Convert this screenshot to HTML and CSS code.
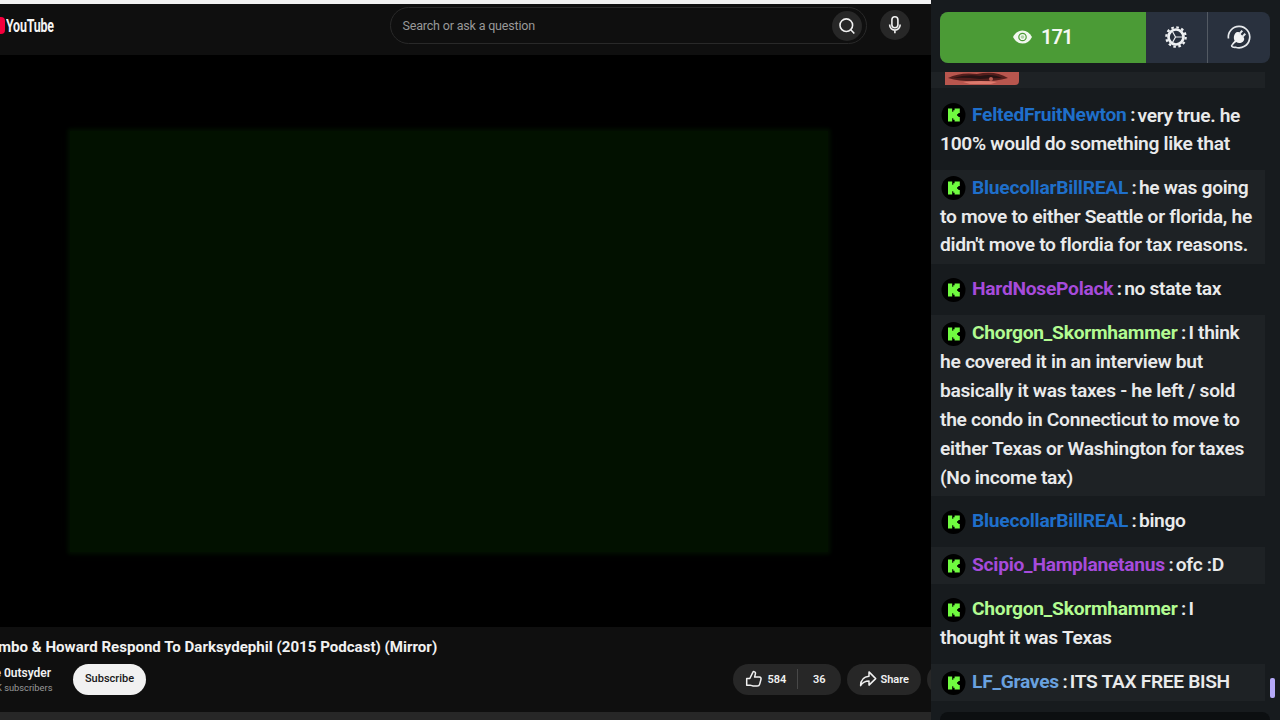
FILE: index.html
```html
<!DOCTYPE html>
<html lang="en">
<head>
<meta charset="utf-8">
<title>YouTube</title>
<link rel="stylesheet" href="styles.css">
</head>
<body>
<svg class="defs" width="0" height="0">
  <symbol id="kick" viewBox="0 0 24 24"><circle cx="12" cy="12" r="12" fill="#000"/><path d="M6.500 5.500h4.200v3.300h1.100V7.200h1.300V5.500h5.200v4.400h-1.500v1.200h-1.100v1.800h1.100v1.200h1.500v4.400h-5.200v-1.700h-1.300v-1.600h-1.100v3.300H6.500z" fill="#70fb40"/></symbol>
</svg>
<div class="app">
  <main class="watch">
    <div class="browser-edge"></div>
    <header class="masthead">
      <div class="logo"><span class="logo-mark"></span><span class="logo-word">YouTube</span></div>
      <div class="search">
        <span class="search-text">Search or ask a question</span>
        <span class="round search-btn"><svg width="30" height="30" viewBox="0 0 30 30"><circle cx="14.3" cy="14.2" r="6.3"/><path d="M18.8 18.8l3.5 3.7"/></svg></span>
      </div>
      <span class="round mic"><svg width="30" height="30" viewBox="0 0 30 30"><rect x="11.9" y="6.7" width="6" height="11" rx="3"/><path d="M9.7 14.4v.8a5.2 4.9 0 0 0 10.4 0v-.8M14.9 20v3.3"/></svg></span>
    </header>
    <div class="player"><div class="glow"></div></div>
    <section class="info">
      <h1 class="title"><span>mbo &amp; Howard Respond To Darksydephil (2015 Podcast) (Mirror)</span></h1>
      <div class="owner-row">
        <div class="owner"><span class="channel">e 0utsyder</span><span class="subs">K subscribers</span></div>
        <span class="subscribe">Subscribe</span>
        <div class="actions">
          <div class="pill votes">
            <svg width="18" height="18" viewBox="0 0 18 18"><path d="M1.700 8.500h3.100l3-6.100c.3-.7.8-1 1.400-.8 1 .3 1.500 1.100 1.200 2.300l-.8 3.200h4.800c1.300 0 1.900 1 1.600 2.200l-1.300 4.800c-.3 1.200-1.200 2-2.500 2H9c-1.500 0-2.600-.9-3.800-.9H1.700z"/></svg>
            <span class="likes">584</span><span class="sep"></span><span class="dislikes">36</span>
          </div>
          <div class="pill share">
            <svg width="18" height="18" viewBox="0 0 18 18"><path d="M10 1.900l6.700 6.700-6.700 6.500v-4c-3.500 0-6.300 1.400-8.400 4.500.1-5.100 2.500-8.800 8.400-9.400z"/></svg>
            <span>Share</span>
          </div>
          <div class="pill more"></div>
        </div>
      </div>
    </section>
    <div class="description"></div>
  </main>
  <aside class="chat">
    <div class="toolbar">
      <div class="viewers"><svg width="19" height="14" viewBox="0 0 19 14"><path d="M0 7C2.300 2.600 5.400.4 9.500.4S16.700 2.600 19 7c-2.300 4.400-5.400 6.600-9.500 6.600S2.300 11.400 0 7z" fill="#f2f7ef"/><circle cx="9.500" cy="7" r="3.700" fill="none" stroke="#4b9b36" stroke-width="1.200"/><circle cx="9.500" cy="7" r="1.800" fill="#4b9b36" opacity=".4"/></svg><span>171</span></div>
      <div class="tool"><svg width="24" height="24" viewBox="0 0 24 24" fill="none" stroke="#eef0f2"><circle cx="12" cy="12" r="9.700" stroke-width="2.200" stroke-dasharray="2.600 2.479"/><circle cx="12" cy="12" r="7.500" stroke-width="2.700"/><path d="M11.500 12H18.500M11.500 12L8.500 6.500M11.500 12L8.500 17.500" stroke-width="1.200"/></svg></div>
      <div class="tool last"><svg width="26" height="26" viewBox="0 0 26 26" fill="none" stroke="#e6e9ec"><path d="M2.400 14.500A10.700 10.700 0 1 1 9.500 23.200" stroke-width="1.700"/><path d="M7.200 20.200c-1.800.8-2.300 2.200-.5 2.800 1 .4 2.200.5 3.300.3" stroke-width="1.600"/><path d="M9.300 9.200c1-1.300 2.700-1.500 4-.7l4.500 5c.9 1.600.3 3.200-.9 4.200-2 1.700-4.900 1.700-6.700.2l-3 2.700-1.100-1.200 2.500-2.700c-1.200-2.300-1-5.300.7-7.500z" fill="#f2f3f4" stroke="none"/><path d="M13.300 10l3-3.400M16.300 12.900l3-3.200" stroke-width="2"/></svg></div>
    </div>
    <div class="feed">
      <div class="msg cut striped"><svg class="emote" width="74" height="13" viewBox="0 0 74 13"><path d="M0 0h74v9q0 4-4 4H0z" fill="#b8564e"/><path d="M3 6Q15 0 32 2q18-4 31 4-16 4-28 3Q17 10 3 6z" fill="#531e1c"/><path d="M8 6q14-4 27-2 13-3 22 2-12 0-22 1Q20 5 8 6z" fill="#251313"/><path d="M18 10q18-2 34 0l-6 2H25z" fill="#dc7a6d"/><circle cx="46" cy="7" r="2" fill="#b95b50"/></svg></div>
      <div class="msg"><p class="line first tall"><svg class="badge"><use href="#kick"/></svg><b class="blue">FeltedFruitNewton</b><i>:</i><span class="low">very true. he</span></p><p class="line">100% would do something like that</p></div>
      <div class="msg striped"><p class="line first"><svg class="badge"><use href="#kick"/></svg><b class="blue">BluecollarBillREAL</b><i>:</i><span>he was going</span></p><p class="line">to move to either Seattle or florida, he</p><p class="line">didn't move to flordia for tax reasons.</p></div>
      <div class="msg"><p class="line first"><svg class="badge"><use href="#kick"/></svg><b class="purple">HardNosePolack</b><i>:</i><span>no state tax</span></p></div>
      <div class="msg striped"><p class="line first tall"><svg class="badge"><use href="#kick"/></svg><b class="lime">Chorgon_Skormhammer</b><i>:</i><span>I think</span></p><p class="line">he covered it in an interview but</p><p class="line">basically it was taxes - he left / sold</p><p class="line">the condo in Connecticut to move to</p><p class="line">either Texas or Washington for taxes</p><p class="line">(No income tax)</p></div>
      <div class="msg"><p class="line first"><svg class="badge"><use href="#kick"/></svg><b class="blue">BluecollarBillREAL</b><i>:</i><span>bingo</span></p></div>
      <div class="msg striped"><p class="line first"><svg class="badge"><use href="#kick"/></svg><b class="purple">Scipio_Hamplanetanus</b><i>:</i><span>ofc :D</span></p></div>
      <div class="msg"><p class="line first tall"><svg class="badge"><use href="#kick"/></svg><b class="lime">Chorgon_Skormhammer</b><i>:</i><span>I</span></p><p class="line">thought it was Texas</p></div>
      <div class="msg striped"><p class="line first"><svg class="badge"><use href="#kick"/></svg><b class="sky">LF_Graves</b><i>:</i><span>ITS TAX FREE BISH</span></p></div>
    </div>
    <div class="composer"></div>
    <div class="scroll-thumb"></div>
  </aside>
</div>
</body>
</html>
```
FILE: styles.css
```css
* { box-sizing: border-box; }
body { margin: 0; background: #0f0f0f; font-family: Roboto, "Liberation Sans", sans-serif; overflow: hidden; }
.defs { display: block; position: absolute; }
.app { display: flex; width: 1280px; height: 720px; overflow: hidden; }
.watch { width: 931px; display: flex; flex-direction: column; overflow: hidden; background: #0f0f0f; }
.browser-edge { height: 4px; flex: none; background: #f1f1f1; }
.masthead { height: 51px; flex: none; display: flex; align-items: flex-start; padding-top: 3px; }
.logo { width: 390px; flex: none; display: flex; align-items: center; padding-top: 10px; }
.logo-mark { width: 5px; height: 17px; background: #f5003d; border-radius: 0 4px 4px 0; }
.logo-word { margin-left: 1px; font-size: 18px; line-height: 17px; font-weight: 700; color: #f4f4f4; letter-spacing: -.3px; transform: scaleX(.69); transform-origin: left center; }
.search { width: 477px; height: 37px; flex: none; border: 1px solid #292929; border-radius: 19px; display: flex; align-items: center; justify-content: space-between; padding: 0 4px 0 11.500px; }
.search-text { color: #999; font-size: 12.500px; letter-spacing: -.18px; white-space: nowrap; }
.round { width: 30px; height: 30px; flex: none; border-radius: 50%; background: #272727; }
.round svg { display: block; fill: none; stroke: #f1f1f1; stroke-width: 1.600; }
.mic { margin: 3px 0 0 13px; }
.player { height: 572px; flex: none; background: #000; padding: 76px 103px 75px 70px; }
.glow { height: 100%; background: #021100; box-shadow: 0 0 4px 2px #031002, 0 0 10px 3px #020702; }
.info { height: 85px; flex: none; padding-top: 9px; }
.title { margin: 0 0 0 -2px; font-size: 15.080px; line-height: 22px; font-weight: 700; color: #f1f1f1; white-space: nowrap; }
.owner-row { display: flex; align-items: center; height: 31px; margin-top: 6px; }
.owner { width: 73px; flex: none; display: flex; flex-direction: column; padding-top: 1px; white-space: nowrap; }
.channel { margin-left: -5.500px; font-size: 12px; line-height: 15px; font-weight: 600; color: #f1f1f1; }
.subs { margin-left: -4px; font-size: 9.300px; line-height: 14px; color: #999; }
.subscribe { flex: none; width: 73px; height: 31px; border-radius: 16px; background: #f1f1f1; color: #181818; font-size: 11px; font-weight: 500; line-height: 30px; text-align: center; }
.actions { display: flex; gap: 6px; margin-left: 587px; flex: none; }
.pill { height: 31px; flex: none; border-radius: 16px; background: #272727; display: flex; align-items: center; color: #f1f1f1; font-size: 11px; font-weight: 600; padding-bottom: 1px; }
.pill svg { fill: none; stroke: #f1f1f1; stroke-width: 1.500; stroke-linejoin: round; flex: none; }
.votes { width: 107.500px; padding-left: 12px; }
.likes { margin-left: 4.500px; width: 29.500px; }
.sep { width: 1px; height: 20px; background: #484848; }
.dislikes { margin-left: 15px; }
.share { width: 74px; padding-left: 12px; gap: 4px; }
.more { width: 31px; }
.description { flex: 1; background: #272727; }

.chat { width: 349px; flex: none; background: #171b1e; position: relative; display: flex; flex-direction: column; overflow: hidden; }
.toolbar { margin: 12px 0 0 9px; width: 330px; height: 50.500px; border-radius: 8px; overflow: hidden; display: flex; background: #29313e; flex: none; }
.viewers { width: 205.500px; flex: none; background: #4b9b36; display: flex; align-items: center; justify-content: center; gap: 9px; color: #f5f8f3; font-size: 20px; font-weight: 600; letter-spacing: -.9px; }
.viewers svg { flex: none; }
.tool { width: 61px; flex: none; display: flex; align-items: center; justify-content: center; }
.last { width: 63.500px; border-left: 1.500px solid #535a63; }
.feed { margin-top: 9.500px; width: 334px; display: flex; flex-direction: column; gap: 7.200px; flex: none; height: 628.600px; }
.msg { padding: 4px 0 3.800px 9px; flex: none; color: #e9eaeb; }
.striped { background: #1e2225; }
.cut { height: 16px; padding: 0 0 0 14px; margin-bottom: 1.500px; }
.emote { display: block; }
.line { margin: 0; height: 28.800px; line-height: 28.800px; font-size: 19.200px; font-weight: 600; letter-spacing: -.3px; white-space: nowrap; }
.first { display: flex; align-items: center; line-height: 28px; letter-spacing: -.33px; }
.first > b, .first > i, .first > span { margin-top: -1px; }
.tall { height: 29.400px; }
.badge { width: 25px; height: 24px; margin: 0 6.500px 0 .5px; flex: none; }
.line b { font-weight: 700; letter-spacing: -.25px; }
.line i { font-style: normal; margin-right: 2.500px; margin-left: 3.500px; }
.low { position: relative; top: 1px; }
.blue { color: #1f6fca; }
.purple { color: #a64bdb; }
.lime { color: #b2fb91; }
.sky { color: #69a1df; }
.composer { margin: 11.500px 10px 0 9px; height: 30px; border-radius: 8px; background: #0c0f11; flex: none; }
.scroll-thumb { position: absolute; right: 5px; top: 678px; width: 5px; height: 20px; border-radius: 2px; background: #b5a9f8; }
```
